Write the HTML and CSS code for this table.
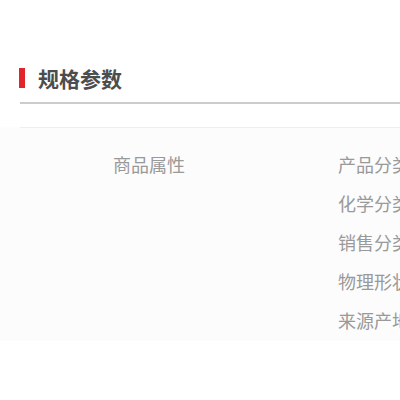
FILE: index.html
```html
<!DOCTYPE html>
<html lang="zh-CN">
<head>
  <meta charset="UTF-8">
  <meta name="viewport" content="width=device-width, initial-scale=1.0">
  <title>规格参数</title>
  <link rel="stylesheet" href="styles.css">
</head>
<body>
  <div class="spec-section">
    <div class="spec-header">
      <span class="spec-mark"></span>
      <h2 class="spec-title">规格参数</h2>
    </div>
    <div class="spec-body">
      <div class="spec-group">
        <div class="spec-group-name">商品属性</div>
        <ul class="spec-list">
          <li class="spec-row">产品分类</li>
          <li class="spec-row">化学分类</li>
          <li class="spec-row">销售分类</li>
          <li class="spec-row">物理形状</li>
          <li class="spec-row">来源产地</li>
        </ul>
      </div>
    </div>
  </div>
</body>
</html>
```

FILE: styles.css
```css
html, body {
  margin: 0;
  padding: 0;
  background: #ffffff;
  overflow: hidden;
}
body {
  font-family: "Noto Sans CJK SC", "Noto Sans", sans-serif;
  color: #555;
}
.spec-section {
  margin-top: 60px;
  width: 1200px;
}
.spec-header {
  display: flex;
  align-items: center;
  margin-left: 20px;
  padding: 8px 0 14px;
  border-bottom: 2px solid #cccccc;
}
.spec-mark {
  display: block;
  width: 6px;
  height: 20px;
  background: #e0262b;
  margin-left: -1px;
}
.spec-title {
  margin: 0 0 0 13px;
  font-size: 21px;
  line-height: 20px;
  font-weight: bold;
  color: #4d4d4d;
}
.spec-body {
  margin-top: 23px;
  background: #fcfcfc;
}
.spec-group {
  display: flex;
  margin-left: 20px;
  border-top: 1px solid #eeeeee;
  padding: 17px 0 1px;
  font-size: 18px;
  color: #999999;
}
.spec-group-name {
  width: 318px;
  padding-left: 93px;
  box-sizing: border-box;
  line-height: 39px;
}
.spec-list {
  list-style: none;
  margin: 0;
  padding: 0;
}
.spec-row {
  line-height: 39px;
  height: 39px;
  white-space: nowrap;
}
```
